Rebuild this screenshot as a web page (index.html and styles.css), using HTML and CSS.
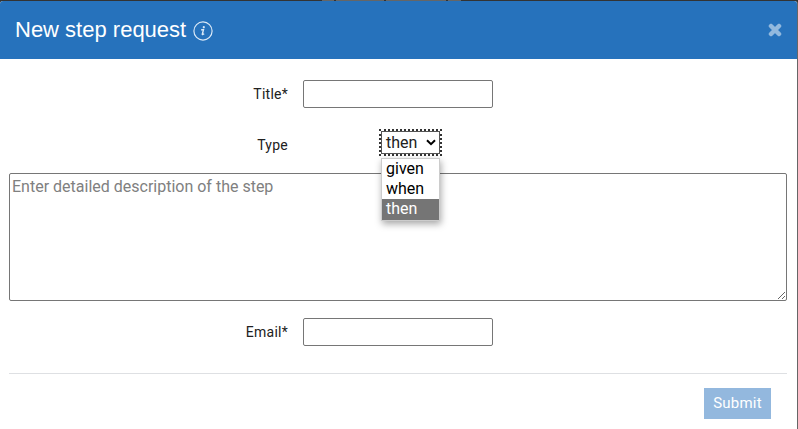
FILE: index.html
```
<!DOCTYPE html>
<html lang="en">
<head>
<meta charset="utf-8">
<title>New step request</title>
<link rel="stylesheet" href="styles.css">
</head>
<body>
<div class="page-strip"><span></span><span></span><span></span><span></span></div>
<main class="modal">
  <header class="modal-header">
    <h1>New step request</h1>
    <svg class="info" width="20" height="20" viewBox="0 0 20 20" fill="none">
      <circle cx="10" cy="10" r="9.1" stroke="#d9e8f6" stroke-width="1.2"/>
      <circle cx="10.8" cy="6.2" r="1.1" fill="#d9e8f6"/>
      <path d="M8 8.9 10.5 8.6 9.3 13.2Q9.2 14.2 11.2 12.8" stroke="#d9e8f6" stroke-width="1.4"/>
    </svg>
    <svg class="close" width="14" height="14" viewBox="0 0 14 14">
      <path d="M3 3 11 11M11 3 3 11" stroke="#92b9de" stroke-width="4.4" stroke-linecap="round"/>
      <path d="M3 3 11 11M11 3 3 11" stroke="#92b9de" stroke-width="3.4" stroke-linecap="square"/>
    </svg>
  </header>
  <form class="form">
    <div class="row title-row"><label for="title">Title*</label><input id="title" type="text"></div>
    <div class="row type-row">
      <label>Type</label>
      <div class="select">
        <span>then</span>
        <svg width="10" height="7" viewBox="0 0 10 7"><path d="M1 1.2 5 5.2 9 1.2" fill="none" stroke="#000" stroke-width="2"/></svg>
        <ul class="options"><li>given</li><li>when</li><li class="selected">then</li></ul>
      </div>
    </div>
    <textarea class="description" placeholder="Enter detailed description of the step"></textarea>
    <div class="row email-row"><label for="email">Email*</label><input id="email" type="text"></div>
    <footer class="actions"><button type="button">Submit</button></footer>
  </form>
</main>
</body>
</html>
```
FILE: styles.css
```
* { box-sizing: border-box; }
body {
  margin: 0;
  height: 429px;
  overflow: hidden;
  background: #333;
  font-family: Roboto, "Liberation Sans", sans-serif;
  color: #212121;
}
.page-strip {
  height: 1px;
  display: flex;
  gap: 2px;
  padding-left: 322px;
}
.page-strip span { background: #666; width: 12px; }
.page-strip span:nth-child(2) { width: 48px; }
.page-strip span:nth-child(3) { width: 60px; }
.page-strip span:nth-child(4) { width: 13px; }
.modal {
  width: 797px;
  height: 428px;
  background: #fff;
  border-radius: 3px 3px 0 0;
  overflow: hidden;
  box-shadow: 1px 0 0 #666;
}
.modal-header {
  height: 58px;
  background: #2672bc;
  display: flex;
  align-items: center;
  padding: 0 15px 0 15px;
}
.modal-header h1 {
  margin: 0;
  font: 400 22px/26px "Liberation Sans", Arial, sans-serif;
  color: #fff;
}
.info { margin: 1px 0 0 7px; }
.close { margin-left: auto; }
.form { padding: 0 10px 0 9px; }
.row { display: flex; align-items: center; }
.row label {
  width: 279px;
  text-align: right;
  font-size: 14px;
  letter-spacing: 0.25px;
}
.row input {
  width: 190px;
  height: 28px;
  margin: 0 0 0 15px;
  border: 1px solid #767676;
  border-radius: 2px;
}
.title-row { padding-top: 21px; }
.type-row { height: 65px; padding-top: 8px; }
.select {
  position: relative;
  width: 59px;
  height: 23px;
  margin: -5px 0 0 93px;
  padding: 0 3px 0 4px;
  border: 1px solid #555;
  outline: 2px dotted #333;
  display: flex;
  align-items: center;
  justify-content: space-between;
  font-size: 16px;
}
.options {
  position: absolute;
  z-index: 1;
  top: 26px;
  left: -1px;
  width: 59px;
  margin: 0;
  padding: 0;
  border: 1px solid #ccc;
  background: #fff;
  box-shadow: 1px 3px 7px rgba(0, 0, 0, 0.35);
  list-style: none;
  color: #000;
}
.options li { height: 20px; padding-left: 4px; line-height: 20px; }
.options .selected { height: 21px; background: #757575; color: #fff; }
.description {
  display: block;
  width: 778px;
  height: 128px;
  margin: 0;
  padding: 2px;
  border: 1px solid #767676;
  border-radius: 2px;
  font: 16px/22px Roboto, sans-serif;
}
.description::placeholder { color: #808080; }
.email-row { padding-top: 17px; }
.actions {
  display: flex;
  justify-content: flex-end;
  margin-top: 27px;
  padding: 14px 16px 0 0;
  border-top: 1px solid #dee0e3;
}
.actions button {
  width: 67px;
  height: 31px;
  padding: 0 0 2px;
  border: 0;
  background: #93b8de;
  color: #fff;
  font: 400 15px Roboto, sans-serif;
  letter-spacing: 0.2px;
}
```
